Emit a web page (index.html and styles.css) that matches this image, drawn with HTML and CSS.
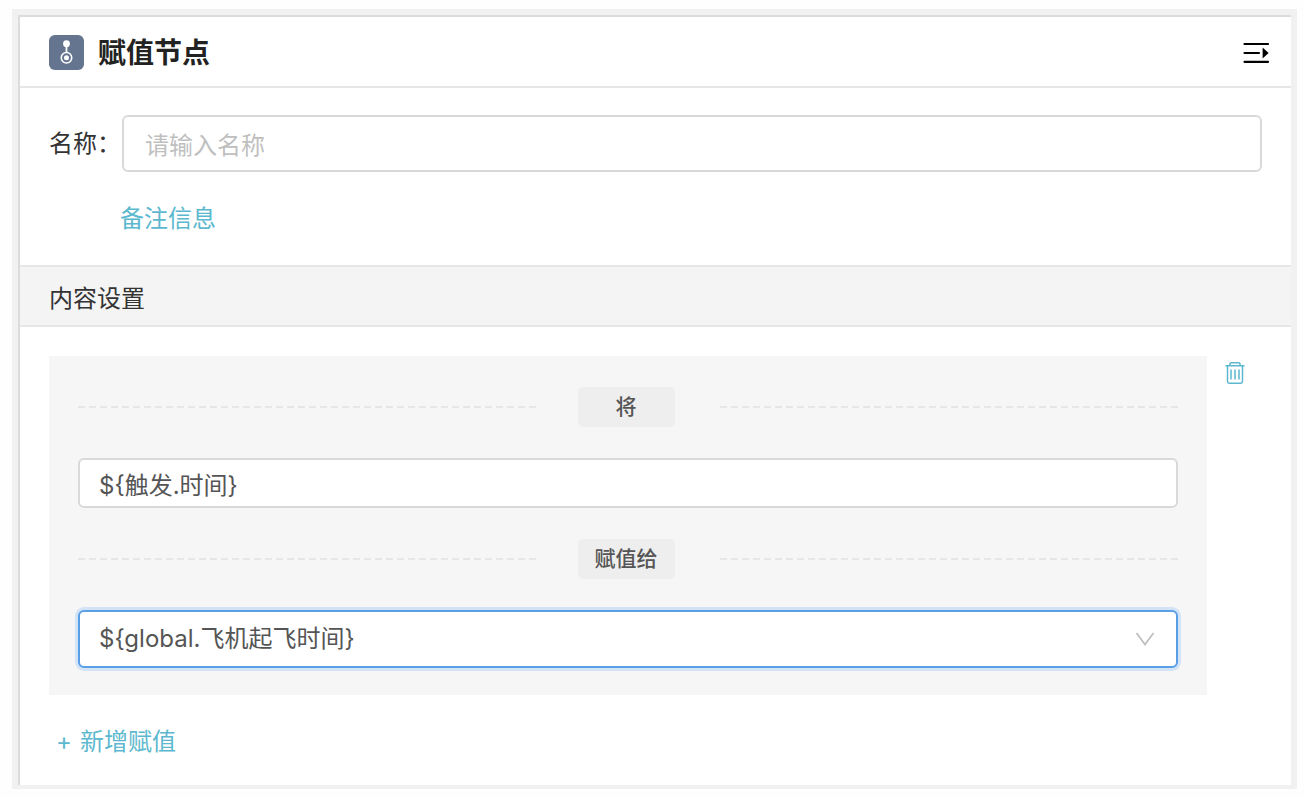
FILE: index.html
```html
<!DOCTYPE html>
<html lang="zh-CN">

<head>
    <meta charset="utf-8">
    <title>赋值节点</title>
    <link rel="stylesheet" href="styles.css">
</head>

<body>
    <div class="frame">
        <main class="panel">
            <header class="header">
                <svg class="logo" viewBox="0 0 36 36">
                    <rect width="36" height="36" rx="6" fill="#65758f" />
                    <circle cx="18" cy="9" r="3.5" fill="#fff" />
                    <path d="M18 11v7" stroke="#fff" stroke-width="1.8" />
                    <circle cx="18" cy="23.4" r="5.4" fill="none" stroke="#fff" stroke-width="1.6" />
                    <circle cx="18" cy="23.4" r="2.6" fill="#fff" />
                </svg>
                <h1>赋值节点</h1>
                <button class="iconbtn collapse" aria-label="收起">
                    <svg width="26" height="22" viewBox="0 0 26 22">
                        <path d="M1.500 2h23.500M1.500 11h14.500M1.500 19.800h23.500" stroke="#000" stroke-width="2.200" stroke-linecap="round" />
                        <path d="M19.600 5.500v11l6-5.500z" fill="#000" />
                    </svg>
                </button>
            </header>

            <form class="base">
                <div class="row">
                    <label for="name">名称：</label>
                    <input class="box name" id="name" type="text" placeholder="请输入名称">
                </div>
                <a class="link remark" href="#">备注信息</a>
            </form>

            <h2>内容设置</h2>

            <section class="content">
                <div class="item">
                    <div class="assign">
                        <div class="divider"><label class="tag" for="source">将</label></div>
                        <input class="box source" id="source" type="text" value="${触发.时间}">
                        <div class="divider"><label class="tag" for="target">赋值给</label></div>
                        <div class="selectbox">
                            <select class="box target" id="target">
                                <option>${global.飞机起飞时间}</option>
                            </select>
                            <svg class="arrow" width="20" height="14" viewBox="0 0 20 14">
                                <path d="M1.500 1l8.500 11.500L18.500 1" fill="none" stroke="#bfbfbf" stroke-width="1.800" />
                            </svg>
                        </div>
                    </div>
                    <button class="iconbtn del" aria-label="删除">
                        <svg width="20" height="24" viewBox="0 0 20 24" fill="none" stroke="#5cb8ce" stroke-width="1.500">
                            <path d="M.5 4.800h19M5 4.500V3q0-1.300 1.300-1.300h7.400Q15 1.700 15 3v1.500" />
                            <path d="M2.500 5v15.500q0 1.700 1.700 1.700h11.600q1.700 0 1.700-1.700V5" />
                            <path d="M6 8.500v10M10 8.500v10M14 8.500v10" />
                        </svg>
                    </button>
                </div>
                <button class="link add"><span>+</span>新增赋值</button>
            </section>
        </main>
    </div>
</body>

</html>
```

FILE: styles.css
```css
* {
    box-sizing: border-box;
}

body {
    margin: 0;
    padding: 9px 7px 9px 12px;
    min-height: 100vh;
    display: flex;
    background-color: #fefefe;
    font-family: Inter, "Noto Sans CJK SC", sans-serif;
    font-size: 24px;
    line-height: 36px;
    color: #333;
}

input, select, button {
    font: inherit;
    color: inherit;
}

button {
    border: 0;
    padding: 0;
    background: none;
    cursor: pointer;
}

svg {
    display: block;
}

.frame {
    flex: 1;
    display: flex;
    padding: 6px 6px 4px;
    background-color: #f1f1f2;
}

.panel {
    flex: 1;
    border-top: 2px solid #dcdcdd;
    border-left: 2px solid #dcdcdd;
    background-color: white;
}

.header {
    display: flex;
    align-items: center;
    height: 71px;
    padding: 2px 22px 0 29px;
    border-bottom: 2px solid #e6e6e6;
}

.logo {
    width: 35px;
    height: 35px;
}

h1 {
    margin: 0 auto 0 14px;
    font-size: 28px;
    font-weight: 600;
    color: #222;
}

.base {
    padding: 27px 29px 28px;
}

.row {
    display: flex;
    align-items: center;
    margin-bottom: 29px;
}

.row label {
    width: 73px;
    flex: none;
}

.box {
    display: block;
    width: 100%;
    padding: 0 19px;
    border: 2px solid #d9d9d9;
    border-radius: 6px;
    background-color: white;
    color: #555;
    outline: none;
}

.name {
    height: 57px;
    padding: 4px 21px 0;
}

.name::placeholder {
    color: #bfbfbf;
}

.link {
    color: #5cb8ce;
    text-decoration: none;
}

.remark {
    display: block;
    width: max-content;
    margin-left: 71px;
}

h2 {
    margin: 0;
    padding: 14px 29px 8px;
    border-top: 2px solid #e6e6e6;
    border-bottom: 2px solid #e6e6e6;
    background-color: #f4f4f4;
    font-size: 24px;
    font-weight: 400;
}

.content {
    padding: 29px 29px 24px;
}

.item {
    display: flex;
    align-items: flex-start;
    gap: 18px;
    margin-bottom: 29px;
}

.assign {
    flex: 1;
    padding: 31px 29px 27px;
    background-color: #f6f6f6;
}

.divider {
    display: flex;
    align-items: center;
}

.divider::before, .divider::after {
    content: "";
    flex: 1;
    height: 2px;
    background: repeating-linear-gradient(to right, #e6e6e6 0 7px, transparent 7px 11px);
}

.tag {
    width: 97px;
    margin: 0 45px 0 41px;
    border-radius: 5px;
    background-color: #eee;
    font-size: 21px;
    font-weight: 500;
    line-height: 40px;
    text-align: center;
    color: #555;
}

.source {
    height: 50px;
    margin: 31px 0;
}

.selectbox {
    display: grid;
    align-items: center;
    margin-top: 31px;
}

.target {
    grid-area: 1 / 1;
    height: 58px;
    border-color: #5a9fe6;
    box-shadow: 0 0 0 3px #d3e4f8;
    appearance: none;
}

.arrow {
    grid-area: 1 / 1;
    justify-self: end;
    margin-right: 23px;
    pointer-events: none;
}

.del {
    margin: 5px 17px 0 0;
}

.add {
    display: flex;
    gap: 8px;
    margin-left: 7px;
}
```
